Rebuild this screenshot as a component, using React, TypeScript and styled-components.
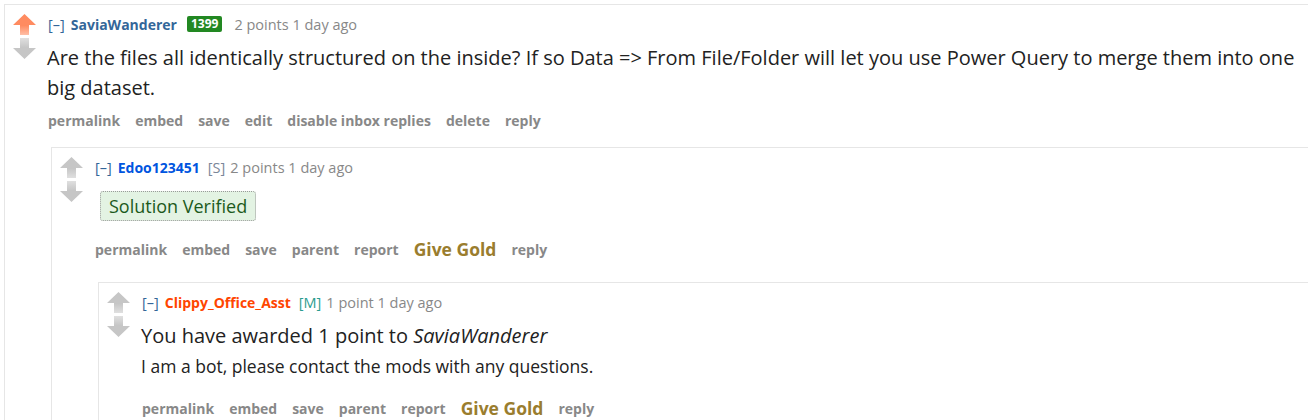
import React from "react";
import styled, { createGlobalStyle } from "styled-components";

const Global = createGlobalStyle`
  html, body { margin: 0; padding: 0; background: #fff; overflow: hidden; }
  body { font-family: "Open Sans", "Noto Sans", sans-serif; color: #222; }
`;

const Page = styled.div`
  padding: 4px 0 0 4px;
  width: 1340px;
`;

const Box = styled.div<{ $pb?: number }>`
  display: flex;
  border: 1px solid #e6e6e6;
  border-right: none;
  background: #fff;
  padding-bottom: ${(p) => p.$pb ?? 0}px;
`;

const Midcol = styled.div`
  flex: 0 0 auto;
  width: 34px;
  padding: 9px 0 0 8px;
  display: flex;
  flex-direction: column;
  gap: 3px;
`;

const Entry = styled.div`
  flex: 1 1 auto;
  min-width: 0;
  padding-top: 9px;
`;

const Tagline = styled.div`
  display: flex;
  align-items: center;
  height: 20px;
  font-size: 14.5px;
  color: #888;
  white-space: nowrap;
`;

const Expand = styled.span`
  color: #369;
  margin-right: 6px;
  margin-left: 1px;
`;

const Author = styled.span<{ $color: string }>`
  color: ${(p) => p.$color};
  font-weight: 700;
  font-size: 14px;
`;

const Flair = styled.span`
  background: #228822;
  color: #fff;
  font-weight: 700;
  font-size: 12px;
  line-height: 16px;
  padding: 0 4px;
  border-radius: 2px;
  margin: 0 12px 0 10px;
`;

const Tag = styled.span<{ $color: string }>`
  color: ${(p) => p.$color};
  margin: 0 5px 0 8px;
`;

const Body = styled.div<{ $mt: number }>`
  margin-top: ${(p) => p.$mt}px;
  font-size: 20px;
  line-height: 30px;
  color: #222;
  max-width: 1256px;
`;

const Small = styled.div`
  font-size: 17.5px;
  line-height: 24px;
  margin-top: 3px;
  color: #222;
`;

const Verified = styled.span`
  display: inline-block;
  vertical-align: top;
  margin-left: 6px;
  padding: 0 8px;
  height: 28px;
  line-height: 28px;
  font-size: 18px;
  color: #1c5a1c;
  background: #e3f3e3;
  border: 1px dotted #9a9a9a;
  border-radius: 3px;
`;

const Buttons = styled.div<{ $mt: number }>`
  margin-top: ${(p) => p.$mt}px;
  display: flex;
  align-items: center;
  height: 20px;
  gap: 15px;
  padding-left: 1px;
`;

const Btn = styled.span<{ $gold?: boolean }>`
  font-weight: 700;
  font-size: ${(p) => (p.$gold ? 17.5 : 14)}px;
  color: ${(p) => (p.$gold ? "#9a7d2e" : "#888")};
`;

const Child = styled.div<{ $mt: number }>`
  margin: ${(p) => p.$mt}px 0 0 4px;
`;

const Arrow = ({ dir, color, id }: { dir: "up" | "down"; color: string; id: string }) => (
  <svg width="23" height="21" viewBox="0 0 23 21" style={{ display: "block" }}>
    <defs>
      <linearGradient id={id} x1="0" y1={dir === "up" ? "0" : "1"} x2="0" y2={dir === "up" ? "1" : "0"}>
        <stop offset="0" stopColor={color} />
        <stop offset="0.55" stopColor={color} />
        <stop offset="1" stopColor={color} stopOpacity="0.55" />
      </linearGradient>
    </defs>
    <path
      d={dir === "up" ? "M11.5 0 L23 11 L16 11 L16 21 L7 21 L7 11 L0 11 Z" : "M11.5 21 L23 10 L16 10 L16 0 L7 0 L7 10 L0 10 Z"}
      fill={`url(#${id})`}
    />
  </svg>
);

const Votes = ({ up, k }: { up?: boolean; k: string }) => (
  <Midcol>
    <Arrow dir="up" color={up ? "#ff8b60" : "#c6c6c6"} id={`u${k}`} />
    <Arrow dir="down" color="#c6c6c6" id={`d${k}`} />
  </Midcol>
);

const buttons1 = ["permalink", "embed", "save", "edit", "disable inbox replies", "delete", "reply"];
const buttons2 = ["permalink", "embed", "save", "parent", "report"];

const ChildButtons = ({ mt }: { mt: number }) => (
  <Buttons $mt={mt}>
    {buttons2.map((b) => (
      <Btn key={b}>{b}</Btn>
    ))}
    <Btn $gold>Give Gold</Btn>
    <Btn>reply</Btn>
  </Buttons>
);

export default function App() {
  return (
    <>
      <Global />
      <Page>
        <Box>
          <Votes up k="1" />
          <Entry>
            <Tagline>
              <Expand>[–]</Expand>
              <Author $color="#336699">SaviaWanderer</Author>
              <Flair>1399</Flair>
              <span>2 points 1 day ago</span>
            </Tagline>
            <Body $mt={9}>
              Are the files all identically structured on the inside? If so Data =&gt; From File/Folder will let you use
              Power Query to merge them into one big dataset.
            </Body>
            <Buttons $mt={7}>
              {buttons1.map((b) => (
                <Btn key={b}>{b}</Btn>
              ))}
            </Buttons>
            <Child $mt={17}>
              <Box>
                <Votes k="2" />
                <Entry>
                  <Tagline>
                    <Expand>[–]</Expand>
                    <Author $color="#0055df">Edoo123451</Author>
                    <Tag $color="#7a8699">[S]</Tag>
                    <span>2 points 1 day ago</span>
                  </Tagline>
                  <Body $mt={14}>
                    <Verified>Solution Verified</Verified>
                  </Body>
                  <ChildButtons mt={18} />
                  <Child $mt={23}>
                    <Box $pb={60}>
                      <Votes k="3" />
                      <Entry>
                        <Tagline>
                          <Expand>[–]</Expand>
                          <Author $color="#ff4500">Clippy_Office_Asst</Author>
                          <Tag $color="#2a9d8f">[M]</Tag>
                          <span>1 point 1 day ago</span>
                        </Tagline>
                        <Body $mt={9}>
                          You have awarded 1 point to <em>SaviaWanderer</em>
                        </Body>
                        <Small>I am a bot, please contact the mods with any questions.</Small>
                        <ChildButtons mt={20} />
                      </Entry>
                    </Box>
                  </Child>
                </Entry>
              </Box>
            </Child>
          </Entry>
        </Box>
      </Page>
    </>
  );
}
